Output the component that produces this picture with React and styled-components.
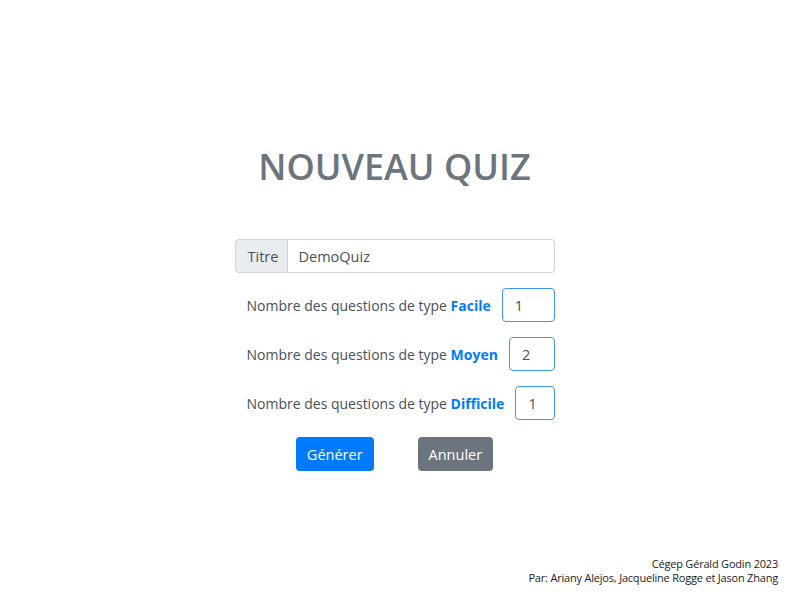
import React from 'react'
import styled, { createGlobalStyle } from 'styled-components'

const GlobalStyle = createGlobalStyle`
    body {
        margin: 0;
        font-family: "Open Sans", "Noto Sans", sans-serif;
        background: #fff;
        color: #212529;
    }
`

function App() {
    return (
        <Page>
            <GlobalStyle />
            <Main>
                <Title>NOUVEAU QUIZ</Title>
                <Form>
                    <InputGroup>
                        <Addon>Titre</Addon>
                        <TextInput defaultValue="DemoQuiz" />
                    </InputGroup>
                    <Row>
                        <Label>Nombre des questions de type <strong>Facile</strong></Label>
                        <NumberInput defaultValue="1" />
                    </Row>
                    <Row>
                        <Label>Nombre des questions de type <strong>Moyen</strong></Label>
                        <NumberInput defaultValue="2" />
                    </Row>
                    <Row>
                        <Label>Nombre des questions de type <strong>Difficile</strong></Label>
                        <NumberInput defaultValue="1" />
                    </Row>
                    <Actions>
                        <Button variant="primary">Générer</Button>
                        <Button variant="secondary">Annuler</Button>
                    </Actions>
                </Form>
            </Main>
            <Footer>
                <div>Cégep Gérald Godin 2023</div>
                <div>Par: Ariany Alejos, Jacqueline Rogge et Jason Zhang</div>
            </Footer>
        </Page>
    )
}

export default App

const Page = styled.div`
    min-height: 600px;
    display: flex;
    flex-direction: column;
    padding-right: 11px;
    box-sizing: border-box;
`

const Main = styled.main`
    display: flex;
    flex-direction: column;
    align-items: center;
    padding-top: 143px;
`

const Title = styled.h1`
    margin: 0;
    font-size: 36px;
    line-height: 48px;
    font-weight: 600;
    color: #6c757d;
`

const Form = styled.form`
    width: 320px;
    margin-top: 48px;
    display: flex;
    flex-direction: column;
    gap: 15px;
`

const InputGroup = styled.div`
    display: flex;
    height: 34px;
`

const Addon = styled.span`
    display: flex;
    align-items: center;
    padding: 0 12px;
    width: 53px;
    box-sizing: border-box;
    background: #e9ecef;
    border: 1px solid #ced4da;
    border-radius: 4px 0 0 4px;
    color: #495057;
    font-size: 14.5px;
`

const TextInput = styled.input`
    flex: 1;
    min-width: 0;
    border: 1px solid #ced4da;
    border-left: none;
    border-radius: 0 4px 4px 0;
    padding: 0 11px;
    font-family: inherit;
    font-size: 14.5px;
    color: #495057;
    outline: none;
`

const Row = styled.div`
    display: flex;
    align-items: center;
    height: 34px;
    padding-left: 12px;
`

const Label = styled.label`
    font-size: 14px;
    color: #495057;
    white-space: nowrap;
    margin-right: 11px;

    strong {
        color: #007bff;
        font-weight: 700;
    }
`

const NumberInput = styled.input`
    flex: 1;
    min-width: 0;
    height: 34px;
    box-sizing: border-box;
    border: 1px solid #3d95f5;
    border-radius: 4px;
    padding: 0 12px;
    font-family: inherit;
    font-size: 14.5px;
    color: #495057;
    outline: none;
`

const Actions = styled.div`
    display: flex;
    justify-content: center;
    gap: 44px;
    margin-top: 2px;
`

const Button = styled.button`
    height: 34px;
    padding: 0 11px;
    border: none;
    border-radius: 4px;
    font-family: inherit;
    font-size: 14.5px;
    color: #fff;
    background: ${p => (p.variant === 'primary' ? '#007bff' : '#6c757d')};
    cursor: pointer;
`

const Footer = styled.footer`
    margin-top: auto;
    padding: 0 11px 15px 0;
    text-align: right;
    font-size: 11px;
    line-height: 14px;
    letter-spacing: -0.2px;
    color: #222;
`
